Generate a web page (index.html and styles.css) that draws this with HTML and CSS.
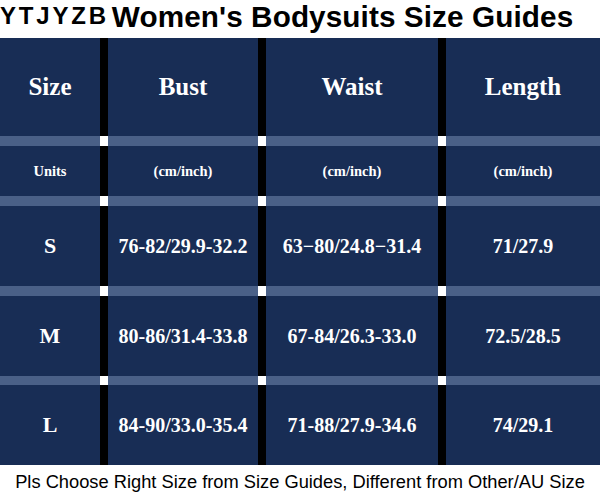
FILE: index.html
```html
<!DOCTYPE html>
<html>
<head>
<meta charset="utf-8">
<link rel="stylesheet" href="styles.css">
</head>
<body>
<div class="page">
  <h1 class="title"><span class="brand">YTJYZB</span><span class="main">Women's Bodysuits Size Guides</span></h1>
  <div class="table">
    <div class="row head">
      <div class="cell">Size</div>
      <div class="cell">Bust</div>
      <div class="cell">Waist</div>
      <div class="cell">Length</div>
    </div>
    <div class="row sep"><div class="seg"></div><div class="seg"></div><div class="seg"></div><div class="seg"></div></div>
    <div class="row units">
      <div class="cell">Units</div>
      <div class="cell">(cm/inch)</div>
      <div class="cell">(cm/inch)</div>
      <div class="cell">(cm/inch)</div>
    </div>
    <div class="row sep"><div class="seg"></div><div class="seg"></div><div class="seg"></div><div class="seg"></div></div>
    <div class="row data">
      <div class="cell size">S</div>
      <div class="cell">76-82/29.9-32.2</div>
      <div class="cell">63−80/24.8−31.4</div>
      <div class="cell">71/27.9</div>
    </div>
    <div class="row sep"><div class="seg"></div><div class="seg"></div><div class="seg"></div><div class="seg"></div></div>
    <div class="row data">
      <div class="cell size">M</div>
      <div class="cell">80-86/31.4-33.8</div>
      <div class="cell">67-84/26.3-33.0</div>
      <div class="cell">72.5/28.5</div>
    </div>
    <div class="row sep sep-thin"><div class="seg"></div><div class="seg"></div><div class="seg"></div><div class="seg"></div></div>
    <div class="row data">
      <div class="cell size">L</div>
      <div class="cell">84-90/33.0-35.4</div>
      <div class="cell">71-88/27.9-34.6</div>
      <div class="cell">74/29.1</div>
    </div>
  </div>
  <p class="note">Pls Choose Right Size from Size Guides, Different from Other/AU Size</p>
</div>
</body>
</html>
```

FILE: styles.css
```css
* { box-sizing: border-box; }
html, body { margin: 0; padding: 0; background: #fff; }
.page { width: 600px; height: 499px; overflow: hidden; }
.title {
  margin: 0;
  height: 38px;
  padding-top: 2px;
  display: flex;
  align-items: flex-start;
  font-family: "Liberation Sans", Arial, sans-serif;
  font-weight: bold;
  color: #000;
  white-space: nowrap;
  line-height: 1;
}
.brand {
  font-size: 24px;
  letter-spacing: 2.8px;
  margin-top: 2px;
  margin-right: 3px;
}
.main {
  font-size: 29.7px;
  letter-spacing: 0.1px;
}
.table {
  display: flex;
  flex-direction: column;
  font-family: "Liberation Serif", "Times New Roman", serif;
  font-weight: bold;
  color: #fff;
}
.row {
  display: grid;
  grid-template-columns: 100px 150px 172px 1fr;
  column-gap: 8px;
  background: #000;
}
.cell {
  background: #182d55;
  display: flex;
  align-items: center;
  justify-content: center;
  text-align: center;
}
.head { height: 98px; font-size: 25px; }
.units { height: 50px; font-size: 14.5px; }
.data { height: 80px; font-size: 20px; }
.data .size { font-size: 22px; }
.sep { height: 10px; background: #fff; }
.sep-thin { height: 9px; }
.seg { background: #4a6087; }
.note {
  margin: 0;
  height: 33px;
  display: flex;
  align-items: center;
  justify-content: center;
  font-family: "Liberation Sans", Arial, sans-serif;
  font-size: 18.3px;
  color: #000;
  white-space: nowrap;
}
```
